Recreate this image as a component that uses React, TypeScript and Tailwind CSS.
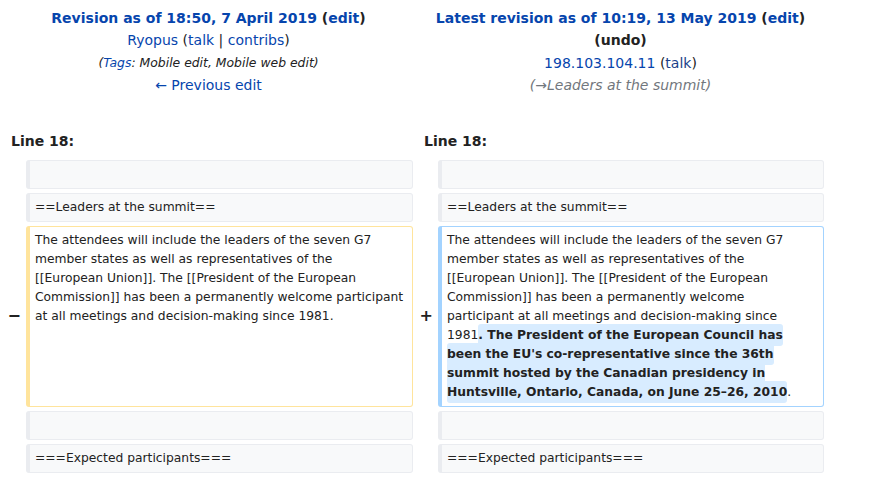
const link = "text-[#0645ad]";

const ctxBox =
  "min-h-[29px] rounded-[3px] border border-l-4 border-[#eaecf0] bg-[#f8f9fa] py-[4px] pl-[5px] pr-[6px] text-[12.3px] leading-[19px] whitespace-nowrap";

const Marker = ({ sign }: { sign?: string }) => (
  <div className="flex items-center justify-end pr-px text-[16px] font-bold leading-none text-[#222222]">
    {sign}
  </div>
);

const Hl = ({ children }: { children: React.ReactNode }) => (
  <span className="rounded-[3px] bg-[#d8ecff] py-[4px] font-bold">{children}</span>
);

export default function App() {
  return (
    <div className="min-h-screen bg-white font-['DejaVu_Sans',sans-serif] text-[#222222]">
      <div className="w-[828px] px-1">
        {/* revision headers */}
        <div className="grid grid-cols-[409px_407px] gap-x-1 pt-[7px] text-center text-[14px] leading-[22.4px]">
          <div>
            <div className="font-bold">
              <a className={link}>Revision as of 18:50, 7 April 2019</a> (<a className={link}>edit</a>)
            </div>
            <div>
              <a className={link}>Ryopus</a> (<a className={link}>talk</a> | <a className={link}>contribs</a>)
            </div>
            <div className="text-[12.4px] italic">
              (<a className={link}>Tags</a>: Mobile edit, Mobile web edit)
            </div>
            <div>
              <a className={link}>← Previous edit</a>
            </div>
          </div>
          <div>
            <div className="font-bold">
              <a className={link}>Latest revision as of 10:19, 13 May 2019</a> (<a className={link}>edit</a>)
            </div>
            <div className="font-bold">(undo)</div>
            <div>
              <a className={link}>198.103.104.11</a> (<a className="text-[#1a3f8a]">talk</a>)
            </div>
            <div className="italic text-[#72777d]">(→Leaders at the summit)</div>
          </div>
        </div>

        {/* line numbers */}
        <div className="mt-[33px] grid grid-cols-[409px_407px] gap-x-1 text-[14px] font-bold leading-[22px]">
          <div className="pl-[7px]">Line 18:</div>
          <div className="pl-[7px]">Line 18:</div>
        </div>

        {/* diff body */}
        <div className="mt-[8px] grid grid-cols-[18px_387px_17px_386px] gap-x-1 gap-y-1">
          <Marker />
          <div className={ctxBox}></div>
          <Marker />
          <div className={ctxBox}></div>

          <Marker />
          <div className={ctxBox}>==Leaders at the summit==</div>
          <Marker />
          <div className={ctxBox}>==Leaders at the summit==</div>

          <Marker sign="−" />
          <div className="rounded-[3px] border border-l-4 border-[#ffe49c] bg-white py-[4px] pl-[5px] pr-[6px] text-[12.3px] leading-[19px] whitespace-nowrap">
            <div>The attendees will include the leaders of the seven G7</div>
            <div>member states as well as representatives of the</div>
            <div>[[European Union]]. The [[President of the European</div>
            <div>Commission]] has been a permanently welcome participant</div>
            <div>at all meetings and decision-making since 1981.</div>
          </div>
          <Marker sign="+" />
          <div className="rounded-[3px] border border-l-4 border-[#a3d3ff] bg-white py-[4px] pl-[5px] pr-[6px] text-[12.3px] leading-[19px] whitespace-nowrap">
            <div>The attendees will include the leaders of the seven G7</div>
            <div>member states as well as representatives of the</div>
            <div>[[European Union]]. The [[President of the European</div>
            <div>Commission]] has been a permanently welcome</div>
            <div>participant at all meetings and decision-making since</div>
            <div>
              1981<Hl>. The President of the European Council has </Hl>
            </div>
            <div>
              <Hl>been the EU's co-representative since the 36th </Hl>
            </div>
            <div>
              <Hl>summit hosted by the Canadian presidency in </Hl>
            </div>
            <div>
              <Hl>Huntsville, Ontario, Canada, on June 25–26, 2010</Hl>.
            </div>
          </div>

          <Marker />
          <div className={ctxBox}></div>
          <Marker />
          <div className={ctxBox}></div>

          <Marker />
          <div className={ctxBox}>===Expected participants===</div>
          <Marker />
          <div className={ctxBox}>===Expected participants===</div>
        </div>
      </div>
    </div>
  );
}
